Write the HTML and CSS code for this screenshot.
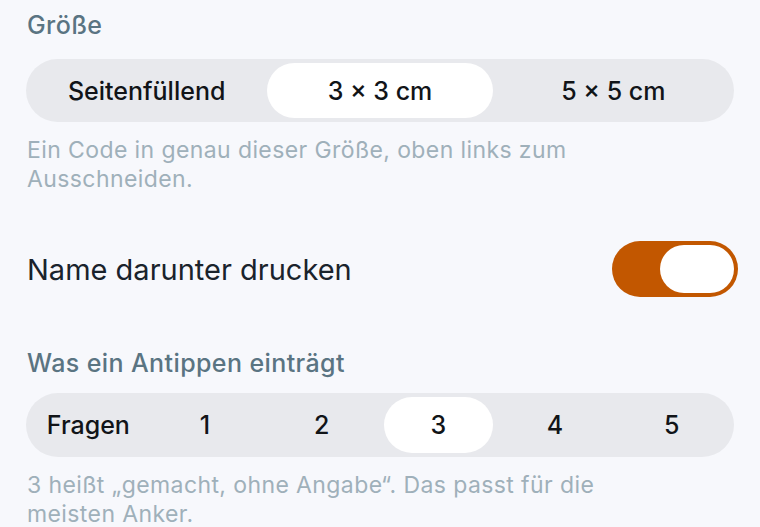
FILE: index.html
```html
<!DOCTYPE html>
<html lang="de">
<head>
  <meta charset="UTF-8">
  <meta name="viewport" content="width=device-width, initial-scale=1">
  <title>Druckeinstellungen</title>
  <link rel="stylesheet" href="styles.css">
</head>
<body>

<section class="gruppe">
  <h3 class="titel titel-groesse">Größe</h3>
  <div class="segmente drei">
    <button class="segment">Seitenfüllend</button>
    <button class="segment aktiv">3 × 3 cm</button>
    <button class="segment">5 × 5 cm</button>
  </div>
  <p class="hinweis">Ein Code in genau dieser Größe, oben links zum Ausschneiden.</p>
</section>

<div class="zeile">
  <span class="zeile-text">Name darunter drucken</span>
  <span class="schalter an"><span class="knopf"></span></span>
</div>

<section class="gruppe">
  <h3 class="titel titel-antippen">Was ein Antippen einträgt</h3>
  <div class="segmente sechs">
    <button class="segment">Fragen</button>
    <button class="segment">1</button>
    <button class="segment">2</button>
    <button class="segment aktiv">3</button>
    <button class="segment">4</button>
    <button class="segment">5</button>
  </div>
  <p class="hinweis">3 heißt „gemacht, ohne Angabe“. Das passt für die meisten Anker.</p>
</section>

</body>
</html>
```

FILE: styles.css
```css
body {
  margin: 0;
  padding: 11px 26px 0 26px;
  background-color: #f7f8fc;
  font-family: Inter, "Noto Sans", sans-serif;
  color: #111418;
}

.titel {
  margin: 0 0 0 1px;
  font-size: 25px;
  line-height: 28px;
  font-weight: 500;
  letter-spacing: 0.4px;
  color: #5a7482;
}

.titel-groesse {
  margin-bottom: 20px;
}

.titel-antippen {
  margin-top: 52px;
  margin-bottom: 16px;
}

/* Segmentierte Auswahl */
.segmente {
  display: grid;
  padding: 4px;
  height: 55px;
  background-color: #e8e9ed;
  border-radius: 32px;
}

.segmente.drei {
  grid-template-columns: repeat(3, 1fr);
}

.segmente.sechs {
  grid-template-columns: repeat(6, 1fr);
  height: 56px;
}

.segment {
  margin: 0;
  border: none;
  background: none;
  font-family: inherit;
  font-size: 25px;
  font-weight: 500;
  color: #111418;
  border-radius: 28px;
  padding: 0;
}

.segment.aktiv {
  margin: 0 4px;
  background-color: #ffffff;
}

.hinweis {
  margin: 14px 0 0 1px;
  font-size: 23px;
  line-height: 29px;
  letter-spacing: 0.4px;
  color: #9fb0ba;
  max-width: 620px;
}

/* Zeile mit Schalter */
.zeile {
  display: flex;
  align-items: center;
  justify-content: space-between;
  margin-top: 47px;
  margin-right: -4px;
}

.zeile-text {
  margin-left: 1px;
  font-size: 29px;
  color: #1a232c;
}

.schalter {
  display: flex;
  justify-content: flex-end;
  box-sizing: border-box;
  width: 126px;
  height: 56px;
  padding: 4px;
  border-radius: 28px;
  background-color: #c25700;
}

.knopf {
  width: 74px;
  height: 48px;
  border-radius: 24px;
  background-color: #ffffff;
}
```
